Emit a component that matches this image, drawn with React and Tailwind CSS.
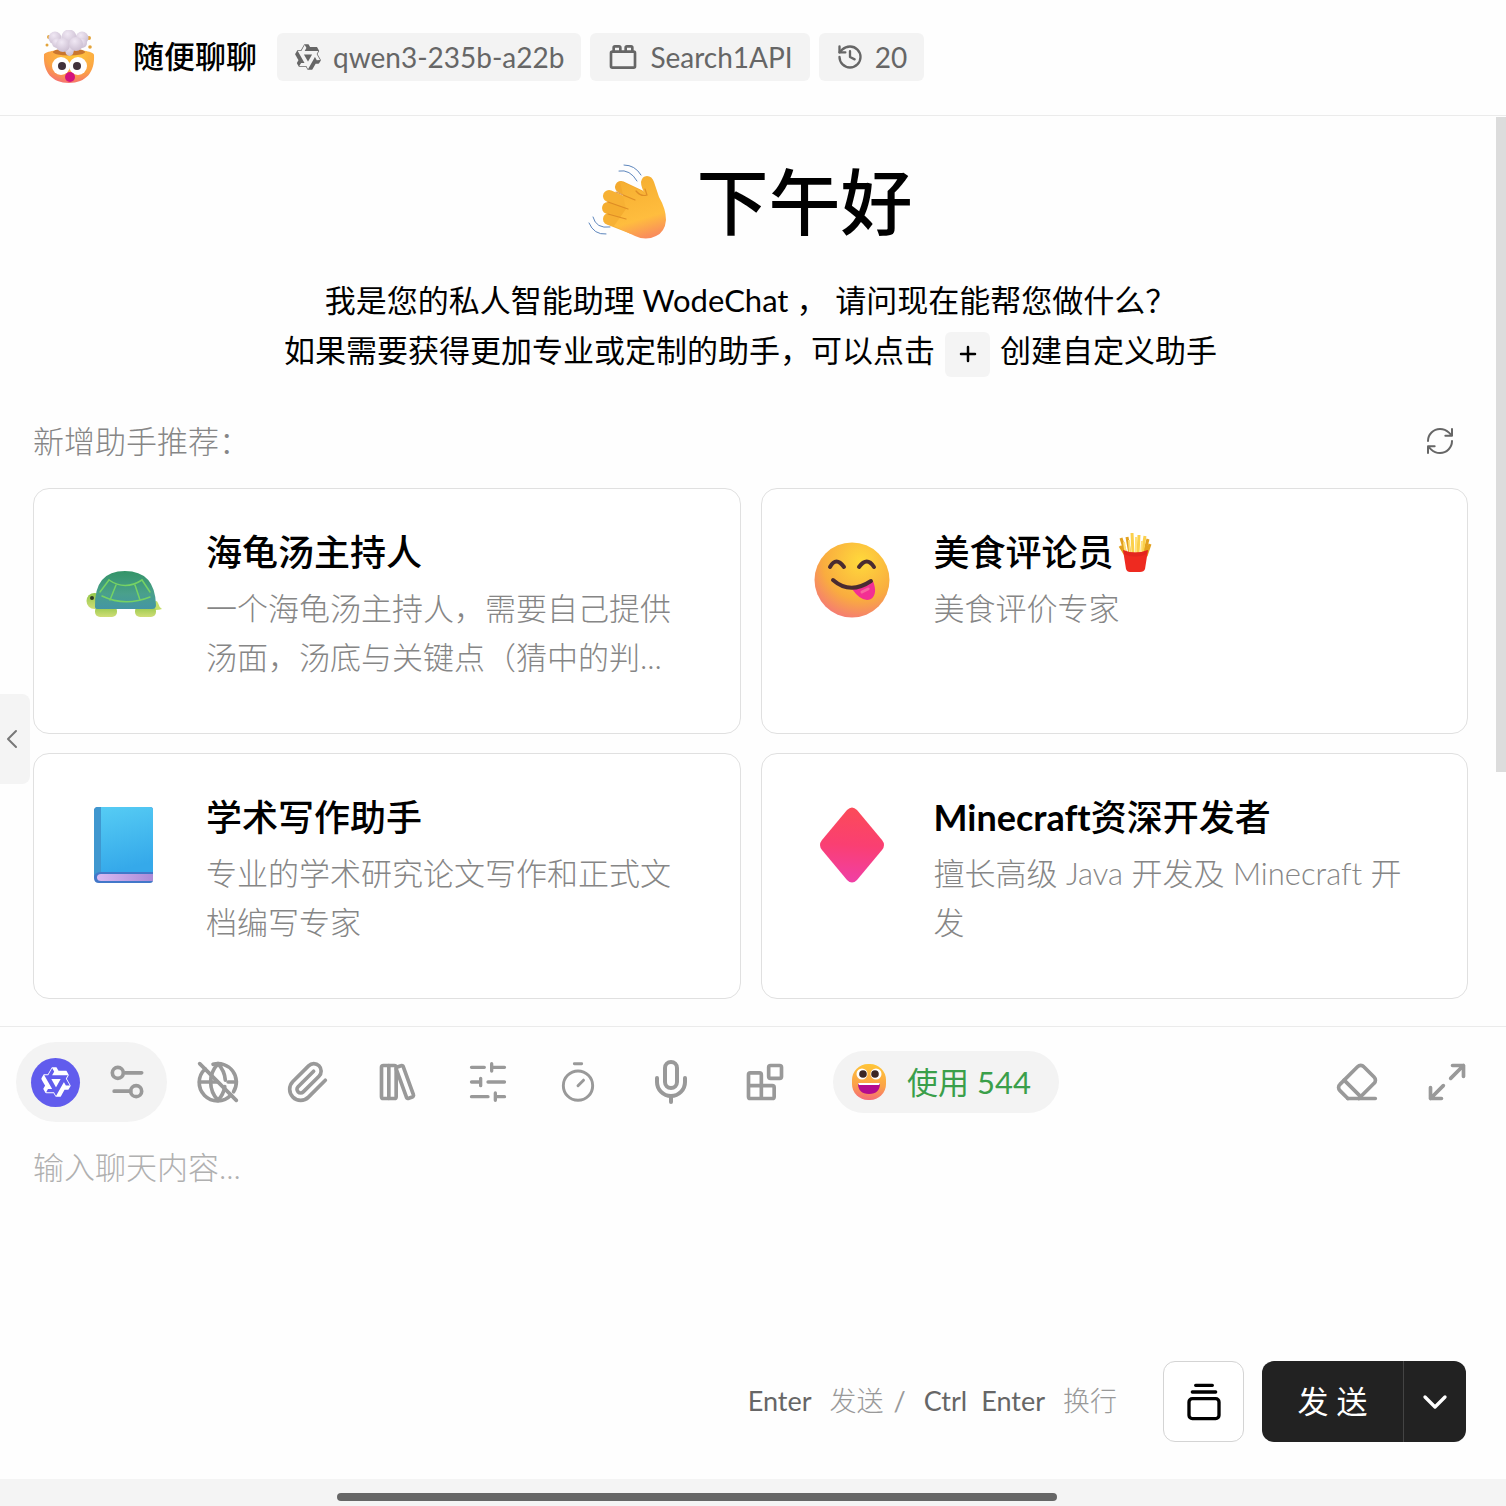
import React from "react";
import { ChevronDown, ChevronLeft } from "lucide-react";

const QWEN =
  "M12.604 1.34c.393.69.784 1.382 1.174 2.075a.18.18 0 00.157.091h5.552c.174 0 .322.11.446.327l1.454 2.57c.19.337.24.478.024.837-.26.43-.513.864-.76 1.3l-.367.658c-.106.196-.223.28-.04.512l2.652 4.637c.172.301.111.494-.043.77-.437.785-.882 1.564-1.335 2.34-.159.272-.352.375-.68.37-.777-.016-1.552-.01-2.327.016a.099.099 0 00-.081.05 575.097 575.097 0 01-2.705 4.74c-.169.293-.38.363-.725.364-.997.003-2.002.004-3.017.002a.537.537 0 01-.465-.271l-1.335-2.323a.09.09 0 00-.083-.049H4.982c-.285.03-.553-.001-.805-.092l-1.603-2.77a.543.543 0 01-.002-.54l1.207-2.12a.198.198 0 000-.197 550.951 550.951 0 01-1.875-3.272l-.79-1.395c-.16-.31-.173-.496.095-.965.465-.813.927-1.625 1.387-2.436.132-.234.304-.334.584-.335a338.3 338.3 0 012.589-.001.124.124 0 00.107-.063l2.806-4.895a.488.488 0 01.422-.246c.524-.001 1.053 0 1.583-.006L11.704 1c.341-.003.724.032.9.34zm-3.432.403a.06.06 0 00-.052.03L6.254 6.788a.157.157 0 01-.135.078H3.253c-.056 0-.07.025-.041.074l5.81 10.156c.025.042.013.062-.034.063l-2.795.015a.218.218 0 00-.2.116l-1.32 2.31c-.044.078-.021.118.068.118l5.716.008c.046 0 .08.02.104.061l1.403 2.454c.046.081.092.082.139 0l5.006-8.76.783-1.382a.055.055 0 01.096 0l1.424 2.53a.122.122 0 00.107.062l2.763-.02a.04.04 0 00.035-.02.041.041 0 000-.04l-2.9-5.086a.108.108 0 010-.113l.293-.507 1.12-1.977c.024-.041.012-.062-.035-.062H9.2c-.059 0-.073-.026-.043-.077l1.434-2.505a.107.107 0 000-.114L9.225 1.774a.06.06 0 00-.053-.031zm6.29 8.02c.046 0 .058.02.034.06l-.832 1.465-2.613 4.585a.056.056 0 01-.05.029.058.058 0 01-.05-.029L8.498 9.841c-.02-.034-.01-.052.028-.054l.216-.012 6.722-.012z";

function QwenLogo({ className }) {
  return (
    <svg viewBox="0 0 24 24" fill="currentColor" fillRule="evenodd" className={className} aria-hidden="true">
      <path d={QWEN} />
    </svg>
  );
}

function Icon({ className = "size-11", width = 2, children }) {
  return (
    <svg
      viewBox="0 0 24 24"
      fill="none"
      stroke="currentColor"
      strokeWidth={width}
      strokeLinecap="round"
      strokeLinejoin="round"
      className={className}
      aria-hidden="true"
    >
      {children}
    </svg>
  );
}

/* ---------- emoji drawings ---------- */

function ExplodingHead({ className }) {
  return (
    <svg viewBox="0 0 54 54" className={className} aria-hidden="true">
      <defs>
        <radialGradient id="eh-face" cx="0.6" cy="0.15" r="0.95">
          <stop offset="0" stopColor="#ffc83a" />
          <stop offset="0.6" stopColor="#fba145" />
          <stop offset="1" stopColor="#f4647c" />
        </radialGradient>
        <radialGradient id="eh-puff" cx="0.4" cy="0.3" r="0.8">
          <stop offset="0" stopColor="#f0e8f4" />
          <stop offset="1" stopColor="#c8bace" />
        </radialGradient>
      </defs>
      <path d="M2 25C2 18 52 18 52 25C53 42 44 53 27 53S1 42 2 25Z" fill="url(#eh-face)" />
      <ellipse cx="27" cy="22" rx="16" ry="3.5" fill="#c9762f" />
      <g fill="#e3a43b">
        <circle cx="7" cy="7" r="2" /><circle cx="47" cy="8" r="2" /><circle cx="5" cy="15" r="1.5" />
        <circle cx="48" cy="17" r="1.8" /><circle cx="41" cy="4" r="1.3" />
      </g>
      <g fill="url(#eh-puff)">
        <circle cx="13" cy="8" r="6.5" /><circle cx="40" cy="8" r="6.5" /><circle cx="27" cy="7" r="7.5" />
        <circle cx="15" cy="13" r="5" /><circle cx="40" cy="13" r="5" />
        <path d="M21 13H34L31 24Q27.500 28 24 24Z" />
        <circle cx="21" cy="15" r="7" /><circle cx="34" cy="14" r="7" />
      </g>
      <circle cx="19" cy="36" r="9" fill="#fff" />
      <circle cx="36" cy="36" r="9" fill="#fff" />
      <circle cx="20" cy="36" r="4" fill="#41313b" />
      <circle cx="35" cy="36" r="4" fill="#41313b" />
      <circle cx="28" cy="47" r="5" fill="#d3127e" />
    </svg>
  );
}

function WavingHand({ className }) {
  return (
    <svg viewBox="0 0 80 80" className={className} aria-hidden="true">
      <defs>
        <linearGradient id="wh-skin" x1="0.3" y1="0" x2="0.55" y2="1">
          <stop offset="0" stopColor="#f5ae30" />
          <stop offset="0.7" stopColor="#ffbd3e" />
          <stop offset="1" stopColor="#f98d5c" />
        </linearGradient>
      </defs>
      <g fill="none" stroke="#5d86bd" strokeWidth="1" strokeLinecap="round">
        <path d="M36 2Q47 2 53 12" />
        <path d="M31 8Q42 6 49 18" />
        <path d="M1 60Q6 72 18 71" />
        <path d="M5 54Q8 66 22 64" />
      </g>
      <g strokeWidth="12" strokeLinecap="round">
        <path d="M33 24L52 33" stroke="#f3a92e" />
        <path d="M21 33L46 44" stroke="#f7b134" />
        <path d="M20 45L44 54" stroke="#f5ad2f" />
        <path d="M21 56L44 65" stroke="#f7b134" />
      </g>
      <path
        d="M32 18L54 28L57 31Q53 24 53 19Q54 13 59 13Q64 13 66 19L71 34Q78 46 78 57Q77 69 68 73Q58 78 47 73L26 63L38 46Z"
        fill="url(#wh-skin)"
      />
      <g fill="none" stroke="#d98422" strokeWidth="1.200" strokeLinecap="round" opacity="0.8">
        <path d="M28 29L47 37" /><path d="M20 39L40 46" /><path d="M20 51L38 56" /><path d="M48 28Q53 34 59 32L57 26" />
      </g>
    </svg>
  );
}

function Turtle({ className }) {
  return (
    <svg viewBox="0 -7 76 76" className={className} aria-hidden="true">
      <defs>
        <linearGradient id="tt-shell" x1="0" y1="0" x2="0" y2="1">
          <stop offset="0" stopColor="#349468" />
          <stop offset="0.6" stopColor="#4aa08c" />
          <stop offset="1" stopColor="#4395a5" />
        </linearGradient>
        <linearGradient id="tt-skin" x1="0" y1="0" x2="0" y2="1">
          <stop offset="0" stopColor="#93c749" />
          <stop offset="1" stopColor="#d0de77" />
        </linearGradient>
      </defs>
      <path d="M66 57Q70 49 72 54Q73 58 76 60Q70 62 64 60Z" fill="#c5e06b" />
      <circle cx="8.500" cy="52" r="8" fill="url(#tt-skin)" />
      <rect x="9" y="57" width="22" height="11" rx="5" fill="url(#tt-skin)" />
      <rect x="49" y="57" width="21" height="11" rx="5" fill="url(#tt-skin)" />
      <circle cx="6" cy="49" r="2" fill="#2d3a25" />
      <path d="M9 58Q8 22 39 22Q69 22 70 56Q70 60 66 60H11Q9 60 9 58Z" fill="url(#tt-shell)" />
      <g fill="none" stroke="#76d264" strokeWidth="1.500" strokeLinecap="round">
        <path d="M23 31Q39 42 56 31" />
        <path d="M16 47Q39 58 64 48" />
        <path d="M30 36L24 51" />
        <path d="M49 36L54 51" />
        <path d="M23 31L14 43" />
        <path d="M56 31L64 43" />
      </g>
    </svg>
  );
}

function YumFace({ className }) {
  return (
    <svg viewBox="0 0 76 76" className={className} aria-hidden="true">
      <defs>
        <radialGradient id="yf-face" cx="0.62" cy="0.25" r="0.85">
          <stop offset="0" stopColor="#ffd93b" />
          <stop offset="0.6" stopColor="#f9ac3f" />
          <stop offset="1" stopColor="#f4707f" />
        </radialGradient>
      </defs>
      <circle cx="38" cy="38" r="37.500" fill="url(#yf-face)" />
      <path d="M38 47Q50 47 59 39Q64 52 57 57Q48 61 38 47Z" fill="#f32f93" />
      <path d="M48 50L54 47" stroke="#f9649f" strokeWidth="3" strokeLinecap="round" />
      <g fill="none" stroke="#4a2b31" strokeWidth="4" strokeLinecap="round">
        <path d="M16 25Q22 14 30 25" />
        <path d="M45 25Q53 14 60 25" />
        <path d="M19 38Q36 53 57 39" />
      </g>
    </svg>
  );
}

function Fries({ className }) {
  return (
    <svg viewBox="0 0 34 40" className={className} aria-hidden="true">
      <g strokeLinecap="butt" strokeWidth="3">
        <path d="M8 22L3 6M12 22L9 5M26 22L30 7M28 24L32 12M7 22L2 14" stroke="#e2a11f" />
        <path d="M15 22L14 1M20 22L21 3M24 22L27 4" stroke="#fbd04b" />
        <path d="M12 22L11 8M18 22L18 5M23 22L24 9M8 24L6 10" stroke="#ffe07a" strokeWidth="2" />
      </g>
      <path d="M5 18Q17 23 30 18L27 37Q26 40 22 40H12Q9 40 8 37Z" fill="#ee2a20" />
      <path d="M5 18Q17 23 30 18L29 22Q17 27 6 22Z" fill="#d81f1e" opacity="0.5" />
    </svg>
  );
}

function BlueBook({ className }) {
  return (
    <svg viewBox="0 0 76 76" className={className} aria-hidden="true">
      <defs>
        <linearGradient id="bb-cover" x1="0" y1="0" x2="0.2" y2="1">
          <stop offset="0" stopColor="#56ccf4" />
          <stop offset="1" stopColor="#35a9ea" />
        </linearGradient>
        <linearGradient id="bb-page" x1="0" y1="0" x2="1" y2="0">
          <stop offset="0" stopColor="#d8baf2" />
          <stop offset="1" stopColor="#ab8bd8" />
        </linearGradient>
      </defs>
      <path d="M12 0H64Q67 0 67 3V73Q67 76 64 76H13Q8 76 8 71V4Q8 0 12 0Z" fill="#4278c9" />
      <path d="M15 67H67V74H15Q11 74 11 70.500Q11 67 15 67Z" fill="url(#bb-page)" />
      <path d="M15 0H64Q67 0 67 3V65H15Z" fill="url(#bb-cover)" />
      <path d="M12 0H15V65Q10 65 8 69V4Q8 0 12 0Z" fill="#3f97cf" />
    </svg>
  );
}

function Diamond({ className }) {
  return (
    <svg viewBox="0 0 76 76" className={className} aria-hidden="true">
      <defs>
        <linearGradient id="dm-fill" x1="0.5" y1="0" x2="0.45" y2="1">
          <stop offset="0" stopColor="#fb4b58" />
          <stop offset="0.5" stopColor="#fa3f72" />
          <stop offset="1" stopColor="#f03fa6" />
        </linearGradient>
      </defs>
      <path
        d="M33 3Q38 -2 43 3L68 33Q72 38 68 43L43 73Q38 78 33 73L8 43Q4 38 8 33Z"
        fill="url(#dm-fill)"
      />
    </svg>
  );
}

function GrinFace({ className }) {
  return (
    <svg viewBox="0 0 36 38" className={className} aria-hidden="true">
      <defs>
        <linearGradient id="gf-face" x1="0.6" y1="0" x2="0.5" y2="1">
          <stop offset="0" stopColor="#ffc637" />
          <stop offset="0.6" stopColor="#fba248" />
          <stop offset="1" stopColor="#f66a78" />
        </linearGradient>
      </defs>
      <rect x="1" y="1" width="34" height="36" rx="16" fill="url(#gf-face)" />
      <circle cx="11" cy="11" r="5.500" fill="#fff" />
      <circle cx="25" cy="11" r="5.500" fill="#fff" />
      <circle cx="12" cy="11" r="3.800" fill="#3b2625" />
      <circle cx="24" cy="11" r="3.800" fill="#3b2625" />
      <path d="M7 20H29Q29 31 18 31T7 20Z" fill="#b40a8f" />
      <path d="M7 20H29L28 22H8Z" fill="#fff" />
    </svg>
  );
}

/* ---------- page parts ---------- */

function Chip({ icon, children }) {
  return (
    <span className="flex h-12 items-center gap-[11px] rounded-md bg-[#f3f3f3] px-[17px] text-[28px] leading-10 text-[#666]">
      {icon}
      {children}
    </span>
  );
}

function Header() {
  return (
    <header className="flex h-[116px] items-center border-b border-[#ebebeb] pb-0.5 pl-[42px]">
      <ExplodingHead className="size-[54px]" />
      <h1 className="mr-5 ml-[37px] text-[31px] font-medium">随便聊聊</h1>
      <div className="flex gap-[9px]">
        <Chip icon={<QwenLogo className="size-7" />}>qwen3-235b-a22b</Chip>
        <Chip
          icon={
            <Icon className="size-8">
              <rect width="18" height="12" x="3" y="8" rx="1" />
              <path d="M10 8V5c0-.6-.4-1-1-1H6a1 1 0 0 0-1 1v3" />
              <path d="M19 8V5c0-.6-.4-1-1-1h-3a1 1 0 0 0-1 1v3" />
            </Icon>
          }
        >
          Search1API
        </Chip>
        <Chip
          icon={
            <Icon className="size-7">
              <path d="M3 12a9 9 0 1 0 9-9 9.750 9.750 0 0 0-6.740 2.740L3 8" />
              <path d="M3 3v5h5" />
              <path d="M12 7v5l4 2" />
            </Icon>
          }
        >
          20
        </Chip>
      </div>
    </header>
  );
}

const assistants = [
  {
    id: "turtle",
    title: "海龟汤主持人",
    Art: Turtle,
    text: "一个海龟汤主持人，需要自己提供汤面，汤底与关键点（猜中的判...",
  },
  { id: "food", title: "美食评论员", Art: YumFace, Extra: Fries, text: "美食评价专家" },
  { id: "paper", title: "学术写作助手", Art: BlueBook, text: "专业的学术研究论文写作和正式文档编写专家" },
  {
    id: "minecraft",
    title: (
      <span>
        <b>Minecraft</b>资深开发者
      </span>
    ),
    Art: Diamond,
    text: "擅长高级 Java 开发及 Minecraft 开发",
  },
];

function AssistantCard({ title, Art, Extra, text }) {
  return (
    <article className="flex min-h-[246px] gap-11 rounded-2xl border border-[#e0e0e0] bg-white py-[37px] pr-12 pl-[52px]">
      <Art className="mt-4 size-[76px] shrink-0" />
      <div className="min-w-0 flex-1">
        <h3 className="flex items-center gap-1 text-4xl leading-[52px] font-medium">
          {title}
          {Extra && <Extra className="h-10 w-[34px]" />}
        </h3>
        <p className="mt-1.5 line-clamp-2 text-[31px] leading-[49px] font-light text-[#868686]">{text}</p>
      </div>
    </article>
  );
}

function Welcome() {
  return (
    <main className="relative flex-1 pt-[31px] pr-[38px] pb-[26px] pl-[33px]">
      <div className="flex items-center justify-center gap-7">
        <WavingHand className="mt-1 size-20" />
        <h2 className="text-[72px] leading-[108px] font-medium">下午好</h2>
      </div>
      <p className="mt-5 text-center text-[31px] leading-[50px]">
        我是您的私人智能助理 WodeChat ， 请问现在能帮您做什么？
        <br />
        如果需要获得更加专业或定制的助手，可以点击{" "}
        <button type="button" aria-label="新建助手" className="mx-0.5 inline-flex size-[45px] items-center justify-center rounded-md bg-[#f4f4f4] align-middle">
          <Icon className="size-6" width={2.5}>
            <path d="M5 12h14M12 5v14" />
          </Icon>
        </button>{" "}
        创建自定义助手
      </p>
      <div className="mt-[39px] flex items-center justify-between pr-3">
        <h2 className="text-[31px] leading-[50px] font-light text-[#868686]">新增助手推荐：</h2>
        <button type="button" aria-label="换一批" className="text-[#666]">
          <Icon className="size-8" width={1.5}>
            <path d="M3 12a9 9 0 0 1 9-9 9.750 9.750 0 0 1 6.740 2.740L21 8M21 3v5h-5" />
            <path d="M21 12a9 9 0 0 1-9 9 9.750 9.750 0 0 1-6.740-2.740L3 16M8 16H3v5" />
          </Icon>
        </button>
      </div>
      <section className="mt-[22px] grid grid-cols-2 gap-x-5 gap-y-[19px]">
        {assistants.map((a) => (
          <AssistantCard key={a.id} {...a} />
        ))}
      </section>
      <button
        type="button"
        aria-label="收起侧栏"
        className="absolute top-[578px] left-0 flex h-[90px] w-[30px] items-center rounded-r-lg bg-[#f4f4f4] text-[#777]"
      >
        <ChevronLeft className="-ml-1 size-8" strokeWidth={1.5} />
      </button>
      <div className="absolute top-px right-0 h-[655px] w-2.5 bg-[#dcdcdc]" />
    </main>
  );
}

const tools = [
  {
    label: "联网",
    shape: (
      <>
        <path d="M12 2a14.500 14.500 0 0 0 0 20 14.500 14.500 0 0 0 3.700-7.500" />
        <path d="M2 12h9.500" />
        <path d="M20.480 17.300A10 10 0 0 0 9.300 2.370M12 2a14.500 14.500 0 0 1 4 9" />
        <path d="M22 12h-4.500" />
        <path d="M5 4.900A10 10 0 1 0 19.080 19.080" />
        <path d="M2 2l20 20" />
      </>
    ),
  },
  {
    label: "附件",
    shape: (
      <path d="m21.440 11.050-9.190 9.190a6 6 0 0 1-8.490-8.490l8.570-8.570A4 4 0 1 1 18 8.840l-8.590 8.570a2 2 0 0 1-2.830-2.830l8.490-8.480" />
    ),
  },
  {
    label: "知识库",
    shape: (
      <>
        <rect width="8" height="18" x="3" y="3" rx="1" />
        <path d="M7 3v18" />
        <path d="M20.400 18.900c.2.500-.1 1.100-.6 1.300l-1.900.7c-.5.2-1.100-.1-1.300-.6L11.100 5.100c-.2-.5.1-1.100.6-1.300l1.900-.7c.5-.2 1.100.1 1.300.6Z" />
      </>
    ),
  },
  {
    label: "参数",
    width: 1.8,
    shape: <path d="M21 4h-7M10 4H3M21 12h-9M8 12H3M21 20h-5M12 20H3M14 2v4M8 10v4M16 18v4" />,
  },
  {
    label: "历史",
    width: 1.6,
    shape: (
      <>
        <path d="M10 2h4M12 14l3-3" />
        <circle cx="12" cy="14" r="8" />
      </>
    ),
  },
];

function Composer() {
  return (
    <section className="flex h-[453px] flex-col border-t border-[#ebebeb]">
      <div className="flex h-[110px] items-center pr-[37px] pl-4 text-[#999]">
        <div className="flex h-20 w-[151px] items-center justify-between rounded-full bg-[#f3f3f3] pr-[18px] pl-[15px]">
          <button type="button" aria-label="模型" className="flex size-[49px] items-center justify-center rounded-full bg-[#615ced] text-white">
            <QwenLogo className="size-8" />
          </button>
          <button type="button" aria-label="模型设置">
            <Icon>
              <path d="M20 7h-9M14 17H5" />
              <circle cx="17" cy="17" r="3" />
              <circle cx="7" cy="7" r="3" />
            </Icon>
          </button>
        </div>
        <div className="ml-1.5 flex">
          {tools.map((t) => (
            <button key={t.label} type="button" aria-label={t.label} className="flex h-20 w-[90px] items-center justify-center">
              <Icon width={t.width}>{t.shape}</Icon>
            </button>
          ))}
          <button type="button" aria-label="语音" className="flex h-20 w-24 items-center justify-center">
            <Icon className="size-12">
              <path d="M12 2a3 3 0 0 0-3 3v7a3 3 0 0 0 6 0V5a3 3 0 0 0-3-3Z" />
              <path d="M19 10v2a7 7 0 0 1-14 0v-2" />
              <path d="M12 19v3" />
            </Icon>
          </button>
          <button type="button" aria-label="插件" className="flex h-20 w-[92px] items-center justify-center">
            <Icon>
              <rect width="7" height="7" x="14" y="3" rx="1" />
              <path d="M10 21V8a1 1 0 0 0-1-1H4a1 1 0 0 0-1 1v12a1 1 0 0 0 1 1h12a1 1 0 0 0 1-1v-5a1 1 0 0 0-1-1H3" />
            </Icon>
          </button>
        </div>
        <div className="ml-[22px] flex h-[62px] items-center rounded-full bg-[#f3f3f3] pr-7 pl-[18px] text-[31px] text-[#3a9f4a]">
          <GrinFace className="mr-5 h-[38px] w-9" />
          使用 544
        </div>
        <div className="ml-auto flex gap-[46px]">
          <button type="button" aria-label="清空">
            <Icon>
              <path d="m7 21-4.300-4.300c-1-1-1-2.500 0-3.400l9.600-9.600c1-1 2.500-1 3.400 0l5.600 5.600c1 1 1 2.500 0 3.400L13 21" />
              <path d="M22 21H7M5 11l9 9" />
            </Icon>
          </button>
          <button type="button" aria-label="展开">
            <Icon>
              <path d="M15 3h6v6M9 21H3v-6M21 3l-7 7M3 21l7-7" />
            </Icon>
          </button>
        </div>
      </div>
      <textarea
        aria-label="聊天内容"
        placeholder="输入聊天内容..."
        className="w-full flex-1 resize-none px-[33px] pt-1.5 text-[31px] leading-[48px] font-light outline-none placeholder:text-[#b0b0b0]"
      />
      <footer className="flex items-center justify-end pr-10 pb-[37px]">
        <p className="mr-[46px] flex text-[27px] text-[#666]">
          <span>Enter</span>
          <span className="ml-[18px] font-light text-[#999]">发送</span>
          <span className="ml-2.5 text-[#999]">/</span>
          <span className="ml-[18px]">Ctrl</span>
          <span className="ml-3.5">Enter</span>
          <span className="ml-[18px] font-light text-[#999]">换行</span>
        </p>
        <button type="button" aria-label="话题" className="mr-[18px] flex size-[81px] items-center justify-center rounded-xl border border-[#d4d4d4] bg-white">
          <Icon className="size-10">
            <path d="M7 2h10M5 6h14" />
            <rect width="18" height="12" x="3" y="10" rx="2" />
          </Icon>
        </button>
        <div className="flex h-[81px] overflow-hidden rounded-xl bg-[#222] text-white">
          <button type="button" className="w-[142px] border-r border-[#444] text-[31px]">
            发 送
          </button>
          <button type="button" aria-label="更多" className="flex w-[62px] items-center justify-center">
            <ChevronDown className="size-10" />
          </button>
        </div>
      </footer>
    </section>
  );
}

export default function App() {
  return (
    <div className="flex min-h-screen flex-col bg-[#fefefe] font-['Lato','Noto_Sans_CJK_SC',sans-serif] text-black [font-variant-ligatures:none]">
      <Header />
      <Welcome />
      <Composer />
      <div className="flex h-[27px] items-center justify-center bg-[#f4f4f4] pt-2 pr-28">
        <div className="h-2 w-[720px] rounded-full bg-[#666]" />
      </div>
    </div>
  );
}
